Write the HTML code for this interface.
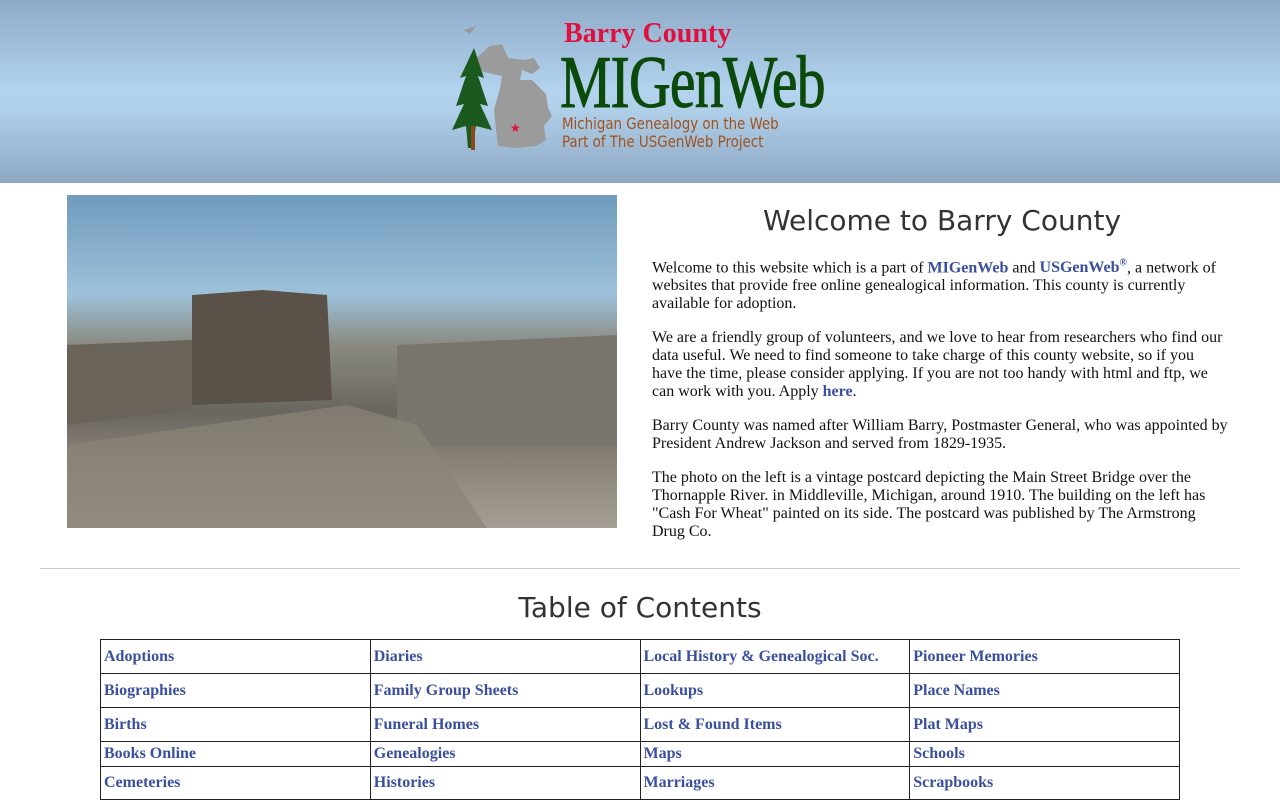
<!DOCTYPE html>
<html><head><meta charset="utf-8"><style>
body{margin:0;background:#fff;font-family:"Liberation Serif",serif;}
.hdr{height:183px;background:linear-gradient(#8eaac8 0%,#b3d3ee 50%,#b0cfe9 60%,#8ea8c2 100%);position:relative}
.logo{position:absolute;left:450px;top:18px;width:380px;height:140px}
.bc{position:absolute;left:114px;top:0;font:bold 28px "Liberation Serif",serif;color:#e0103e}
.mg{position:absolute;left:110px;top:22px;font:74px "Liberation Serif",serif;color:#0c4a0c;transform:scaleX(0.78);transform-origin:left;letter-spacing:-1px;line-height:86px;-webkit-text-stroke:1px #0c4a0c}
.sub{position:absolute;left:112px;font:16px "DejaVu Sans Condensed","DejaVu Sans",sans-serif;color:#a0521e;transform:scaleX(0.93);transform-origin:left}
.photo{position:absolute;left:67px;top:195px;width:550px;height:333px;background:linear-gradient(#6f9bbd 0%,#9ec2da 30%,#8a8a80 45%,#6a6660 65%,#8a8278 80%,#a49e94 100%);overflow:hidden}
.txt{position:absolute;left:652px;top:255px;width:620px;font-size:16px;line-height:18px;color:#111;white-space:nowrap}
.txt p{margin:0 0 16px}
a{color:#3a4fa0;font-weight:bold;text-decoration:none}
h1{position:absolute;margin:0;font:normal 28px "DejaVu Sans",sans-serif;color:#333;left:0;right:0}
hr{position:absolute;left:40px;width:1200px;top:568px;margin:0;border:0;border-top:1px solid #ccc}
table{position:absolute;left:100px;top:639px;width:1080px;border-collapse:collapse}
td{border:1px solid #222;width:25%;padding:0 3px;font-size:16px;font-weight:bold}
</style></head><body>
<div class="hdr"><div class="logo">
<svg width="110" height="140" style="position:absolute;left:0;top:0">
<path d="M20 45 L40 28 L52 26 L58 40 L75 42 L84 40 L90 50 L82 56 L72 52 L70 62 L82 62 L96 76 L98 90 L102 98 L94 108 L96 122 L86 128 L66 130 L48 128 L46 112 L44 92 L50 70 L52 58 L34 54 Z" fill="#9b9b9b"/>
<path d="M14 12 L26 8 L20 16 Z" fill="#999"/>
<path d="M24 30 L34 60 L28 58 L38 88 L30 86 L42 112 L26 108 L22 130 L18 130 L16 108 L2 112 L14 86 L6 88 L16 58 L10 60 Z" fill="#1a5a1e"/>
<rect x="21" y="108" width="4" height="24" fill="#8a4a1a"/>
<text x="60" y="114" font-size="12" fill="#e01040">★</text>
</svg>
<div class="bc">Barry County</div>
<div class="mg">MIGenWeb</div>
<div class="sub" style="top:96px">Michigan Genealogy on the Web</div>
<div class="sub" style="top:114px">Part of The USGenWeb Project</div>
</div></div>
<div class="photo">
<svg width="550" height="333"><path d="M125 100 L195 95 L260 100 L265 205 L125 210 Z" fill="#5a5248"/><path d="M0 150 L125 145 L125 215 L0 230 Z" fill="#6a635a"/><path d="M330 150 L550 140 L550 250 L330 250 Z" fill="#7a756c"/><path d="M0 250 L280 210 L350 230 L420 333 L0 333 Z" fill="#8a8478" opacity=".7"/></svg>
</div>
<h1 style="top:204px;left:652px;width:580px;text-align:center">Welcome to Barry County</h1>
<div class="txt">
<p>Welcome to this website which is a part of <a>MIGenWeb</a> and <a>USGenWeb<sup style="font-size:10px">®</sup></a>, a network of<br>websites that provide free online genealogical information. This county is currently<br>available for adoption.</p>
<p>We are a friendly group of volunteers, and we love to hear from researchers who find our<br>data useful. We need to find someone to take charge of this county website, so if you<br>have the time, please consider applying. If you are not too handy with html and ftp, we<br>can work with you. Apply <a>here</a>.</p>
<p>Barry County was named after William Barry, Postmaster General, who was appointed by<br>President Andrew Jackson and served from 1829-1935.</p>
<p>The photo on the left is a vintage postcard depicting the Main Street Bridge over the<br>Thornapple River. in Middleville, Michigan, around 1910. The building on the left has<br>"Cash For Wheat" painted on its side. The postcard was published by The Armstrong<br>Drug Co.</p>
</div>
<hr>
<h1 style="top:591px;text-align:center">Table of Contents</h1>
<table>
<tr style="height:34px"><td><a>Adoptions</a></td><td><a>Diaries</a></td><td><a>Local History &amp; Genealogical Soc.</a></td><td><a>Pioneer Memories</a></td></tr>
<tr style="height:34px"><td><a>Biographies</a></td><td><a>Family Group Sheets</a></td><td><a>Lookups</a></td><td><a>Place Names</a></td></tr>
<tr style="height:34px"><td><a>Births</a></td><td><a>Funeral Homes</a></td><td><a>Lost &amp; Found Items</a></td><td><a>Plat Maps</a></td></tr>
<tr style="height:25px"><td><a>Books Online</a></td><td><a>Genealogies</a></td><td><a>Maps</a></td><td><a>Schools</a></td></tr>
<tr style="height:33px"><td><a>Cemeteries</a></td><td><a>Histories</a></td><td><a>Marriages</a></td><td><a>Scrapbooks</a></td></tr>
</table>
</body></html>
